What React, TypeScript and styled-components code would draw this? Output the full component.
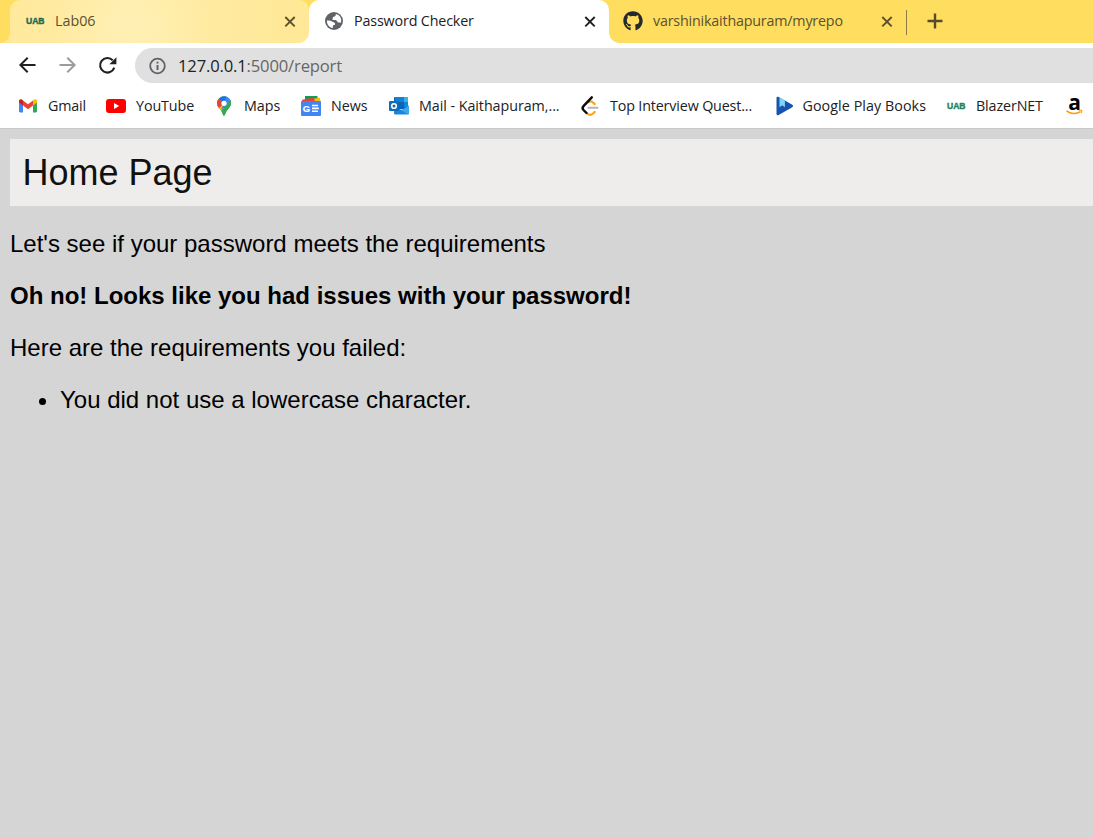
import React from 'react';
import styled, { createGlobalStyle } from 'styled-components';
import { FaGithub } from 'react-icons/fa';

const GlobalStyle = createGlobalStyle`
  * { box-sizing: border-box; }
  html, body { margin: 0; padding: 0; overflow: hidden; }
  body { background: #d5d5d5; }
`;

const Window = styled.div`
  display: flex;
  flex-direction: column;
  width: 100%;
  height: 838px;
  overflow: hidden;
  font-family: 'Open Sans', 'Noto Sans', sans-serif;
`;

const TabStrip = styled.div`
  display: flex;
  height: 43px;
  padding-left: 10px;
  background: #ffdd5e;
`;

type TabKind = 'hover' | 'active' | 'idle';

const tabBackground: Record<TabKind, string> = {
  hover: 'radial-gradient(circle 150px at 122px 26px, #fff0b5 0%, #ffeaa0 55%, #ffe999 100%)',
  active: '#ffffff',
  idle: 'transparent',
};
const flareColor: Record<TabKind, string> = {
  hover: '#ffe78f',
  active: '#ffffff',
  idle: 'transparent',
};

const Tab = styled.div<{ $kind: TabKind; $width: number }>`
  position: relative;
  display: flex;
  align-items: center;
  flex: none;
  width: ${(p) => p.$width}px;
  height: 43px;
  padding: 0 9px 2px ${(p) => (p.$kind === 'idle' ? 14 : 15)}px;
  border-radius: 10px 10px 0 0;
  background: ${(p) => tabBackground[p.$kind]};
  color: ${(p) => (p.$kind === 'active' ? '#202124' : '#5c5130')};

  &::before,
  &::after {
    content: '';
    position: absolute;
    bottom: 0;
    width: 10px;
    height: 10px;
  }
  &::before {
    left: -10px;
    background: radial-gradient(circle at 0 0, transparent 9.5px, ${(p) => flareColor[p.$kind]} 10px);
  }
  &::after {
    display: ${(p) => (p.$kind === 'active' ? 'block' : 'none')};
    right: -10px;
    background: radial-gradient(circle at 100% 0, transparent 9.5px, ${(p) => flareColor[p.$kind]} 10px);
  }
`;

const TabTitle = styled.span<{ $tracking: number }>`
  flex: 1;
  margin-left: 10px;
  font-size: 14.3px;
  line-height: 20px;
  letter-spacing: ${(p) => p.$tracking}px;
  white-space: nowrap;
`;

const StripDivider = styled.div`
  width: 1px;
  height: 25px;
  margin-top: 10px;
  background: #8b7c43;
`;

const NewTab = styled.div`
  display: flex;
  align-items: center;
  height: 43px;
  padding: 0 0 1px 20px;
  color: #574c2a;
`;

const Toolbar = styled.div`
  display: flex;
  align-items: center;
  height: 45px;
  padding: 0 0 0 17px;
  background: #ffffff;
`;

const NavButton = styled.span<{ $muted?: boolean }>`
  display: flex;
  width: 40px;
  color: ${(p) => (p.$muted ? '#9b9c9d' : '#202124')};
`;

const AddressBar = styled.div`
  display: flex;
  align-items: center;
  flex: 1;
  height: 35px;
  margin-left: -2px;
  padding-left: 13px;
  border-radius: 18px 0 0 18px;
  background: #e0e0e0;
`;

const Url = styled.span`
  margin-left: 12px;
  font-size: 16.6px;
  line-height: 24px;
  letter-spacing: -0.16px;
  color: #666666;
`;

const Host = styled.span`
  color: #202124;
`;

const BookmarkBar = styled.div`
  display: flex;
  align-items: center;
  height: 41px;
  padding: 0 0 4px 18px;
  border-bottom: 1px solid #c9c9c9;
  background: #ffffff;
`;

const Bookmark = styled.div<{ $width: number }>`
  display: flex;
  align-items: center;
  flex: none;
  width: ${(p) => p.$width}px;
`;

const BookmarkLabel = styled.span<{ $tracking: number }>`
  margin-left: 10px;
  font-size: 14.3px;
  line-height: 20px;
  letter-spacing: ${(p) => p.$tracking}px;
  color: #202124;
  white-space: nowrap;
`;

const Page = styled.main`
  flex: 1;
  padding: 10px 0 0 10px;
  background: #d5d5d5;
  color: #000;
  font-family: 'Liberation Sans', Arial, sans-serif;
  font-size: 24px;
  line-height: 28px;
`;

const PageHeader = styled.header`
  height: 67px;
  padding: 0 12.5px;
  background: #eeedeb;
  color: #111111;
  font-size: 36px;
  line-height: 67px;
`;

const Paragraph = styled.p<{ $strong?: boolean }>`
  margin: 24px 0;
  font-weight: ${(p) => (p.$strong ? 700 : 400)};
`;

const IssueList = styled.ul`
  margin: 24px 0;
  padding-left: 50px;
`;

const Icon = styled.svg`
  display: block;
  flex: none;
  overflow: visible;
`;

const CloseIcon = () => (
  <Icon width="20" height="20" viewBox="0 0 20 20" stroke="currentColor" strokeWidth="1.9">
    <path d="M5.3 6l9.400 9.400M14.700 6l-9.400 9.400" />
  </Icon>
);

const PlusIcon = () => (
  <Icon width="16" height="16" viewBox="0 0 16 16" stroke="currentColor" strokeWidth="2.4">
    <path d="M8 .5v15M.5 8h15" />
  </Icon>
);

const BackIcon = () => (
  <Icon width="20" height="20" viewBox="0 0 20 20" fill="none" stroke="currentColor" strokeWidth="2">
    <path d="M18.5 9H4M10.700 1.700L3.400 9l7.300 7.300" />
  </Icon>
);

const ForwardIcon = () => (
  <Icon width="20" height="20" viewBox="0 0 20 20" fill="none" stroke="currentColor" strokeWidth="2">
    <path d="M2.500 9H17M10.300 1.700l7.300 7.300-7.300 7.300" />
  </Icon>
);

const ReloadIcon = () => (
  <Icon width="20" height="20" viewBox="0 0 20 20" fill="none" stroke="currentColor" strokeWidth="2.1">
    <path d="M17.300 11.700A7.300 7.300 0 1 1 15.700 4.200" />
    <path d="M19.400 1.200v7h-7z" fill="currentColor" stroke="none" />
  </Icon>
);

const InfoIcon = () => (
  <Icon width="18" height="18" viewBox="0 0 18 18" fill="none" stroke="#5f6368" strokeWidth="1.8">
    <circle cx="9.500" cy="9" r="7.300" />
    <path d="M9.500 8v5M9.500 4.800v1.800" strokeWidth="2" />
  </Icon>
);

const GlobeIcon = () => (
  <Icon width="20" height="20" viewBox="0 0 20 20">
    <circle cx="10" cy="10" r="9" fill="#5f6368" />
    <path
      d="M11.800 3c.2 1.700-.7 2.500-2 2.700-1.300.2-.7 1.300-1.200 2.100-.3.600-.4 1.200.6 1.200h2.300c1.700 0 1.500 2.600 3.100 2.600.9 0 1.300.3 2.200.2C18.200 8.300 16.300 4 11.800 3z"
      fill="#ffffff"
    />
    <path
      d="M2.900 9.500c1.900-.1 3.800.1 5 .9 1.400 1 3.400 1.100 3.300 2.600-.1 1.200-1.900.7-2.300 1.700-.3.800.3 1.400-.1 2.300C5.200 16.600 2.700 13.300 2.900 9.500z"
      fill="#ffffff"
    />
  </Icon>
);

const UabIcon = ({ color = '#1e6b52' }: { color?: string }) => (
  <Icon width="20" height="20" viewBox="0 0 20 20">
    <text
      x="1"
      y="13"
      fontFamily="Liberation Sans, sans-serif"
      fontSize="8.5"
      fontWeight="700"
      fill={color}
      stroke={color}
      strokeWidth="0.4"
      textLength="18.5"
      lengthAdjust="spacingAndGlyphs"
    >
      UAB
    </text>
  </Icon>
);

const GmailIcon = () => (
  <Icon width="20" height="20" viewBox="0 0 20 20">
    <path d="M1 5.500v9.800c0 .7.500 1.200 1.200 1.200H5V8.500z" fill="#4285f4" />
    <path d="M15 8.500v8h2.800c.7 0 1.200-.5 1.200-1.200V5.500z" fill="#34a853" />
    <path d="M15 4.500v5l4-3V5c0-1.600-1.700-2.400-3-1.400z" fill="#fbbc04" />
    <path d="M5 9.500v-5L10 8.200l5-3.700v5l-5 3.800z" fill="#ea4335" />
    <path d="M1 5v1.500l4 3v-5L4 3.600C2.700 2.600 1 3.400 1 5z" fill="#c5221f" />
  </Icon>
);

const YouTubeIcon = () => (
  <Icon width="20" height="20" viewBox="0 0 20 20">
    <rect y="3" width="20" height="14" rx="3" fill="#ff0000" />
    <path d="M8 7v6l5.200-3z" fill="#ffffff" />
  </Icon>
);

const MapsIcon = () => (
  <Icon width="20" height="20" viewBox="0 0 20 20">
    <defs>
      <clipPath id="pin">
        <path d="M10 .3a7 7 0 0 0-7 7c0 3.200 2.100 4.700 4 7.200 1.600 2.100 2 5.200 3 5.200s1.400-3.100 3-5.200c1.900-2.500 4-4 4-7.200a7 7 0 0 0-7-7z" />
      </clipPath>
    </defs>
    <g clipPath="url(#pin)">
      <path d="M0 0h20v20H0z" fill="#34a853" />
      <path d="M10 7.200L3.600 14 0 9l5-6z" fill="#fbbc04" />
      <path d="M2 14l4-4 4-2.800 1.500 3.500-5.500 6z" fill="#fbbc04" />
      <path d="M10 7.200L3.500 13.400 0 8 4.700 2.800z" fill="#ea4335" />
      <path d="M10 7.200L4.600 2.700 8 0h5z" fill="#1a73e8" />
      <path d="M10 7.200L12.400 0 20 4 7 14z" fill="#4285f4" />
      <path d="M16 4.500l4-1V20H5l1-3.500z" fill="#34a853" />
    </g>
    <circle cx="10" cy="7.300" r="2.600" fill="#ffffff" />
  </Icon>
);

const NewsIcon = () => (
  <Icon width="20" height="20" viewBox="0 0 20 20">
    <path d="M4 0h12.500v6H4z" fill="#0c9d58" />
    <path d="M9 3.500L18.600 1.500 20 7H9z" fill="#fbbc04" />
    <path d="M1 3.700L13 1.400 14.500 8H1.500z" fill="#ea4335" />
    <rect y="5" width="20" height="15" rx="1" fill="#4285f4" />
    <text
      x="1.800"
      y="15.700"
      fontFamily="Liberation Sans, sans-serif"
      fontSize="9.500"
      fontWeight="700"
      fill="#ffffff"
      stroke="#ffffff"
      strokeWidth="0.2"
    >
      G
    </text>
    <path d="M11 9.500h6M11 12.400h6.800M11 15.300h6" stroke="#ffffff" strokeWidth="1.600" />
  </Icon>
);

const OutlookIcon = () => (
  <Icon width="20" height="20" viewBox="0 0 20 20">
    <rect x="5" y="1" width="14" height="12" rx="1" fill="#0a5fb4" />
    <path d="M6 1h9v5H6z" fill="#1081d6" />
    <path d="M15 1h4v5h-4z" fill="#35b4ee" />
    <path d="M10 6h5v5h-5z" fill="#0a66b8" />
    <path d="M15 6h4v5h-4z" fill="#1485d8" />
    <path d="M5 10l7.500 4L20 9.500V17c0 .8-.4 1.500-1.200 1.500H6.200c-.7 0-1.200-.6-1.200-1.200z" fill="#1a86d9" />
    <path d="M20 9.500V17c0 .8-.4 1.300-1 1.500L10.500 13l2 1z" fill="#38a9ea" />
    <rect y="5" width="10" height="10" rx="1" fill="#0f6cbd" />
    <circle cx="5" cy="10" r="2.300" fill="none" stroke="#ffffff" strokeWidth="1.600" />
  </Icon>
);

const LeetCodeIcon = () => (
  <Icon width="20" height="20" viewBox="0 0 20 20" fill="none" strokeLinecap="round">
    <path d="M8.500 6.200c1.500-1.200 3.200-1 4.500.3l1.700 1.600M6.900 17.200c2 2 4.400 2 6.200.3l1.600-1.500" stroke="#ffa116" strokeWidth="2.200" />
    <path d="M11.800 1.300L3.700 9.800c-1.500 1.500-1.500 2.800-.2 4.200l3 3" stroke="#0b0b0b" strokeWidth="2.400" />
    <path d="M8.500 11.700h9" stroke="#b3b3b3" strokeWidth="2" />
  </Icon>
);

const PlayBooksIcon = () => (
  <Icon width="20" height="20" viewBox="0 0 20 20">
    <path d="M3.500 2.200c0-1.400 1-1.800 2.200-1.200L19.300 8.800c1 .6 1 1.800 0 2.400L5.700 19c-1.200.6-2.200.2-2.200-1.200z" fill="#1a53ad" />
    <path d="M6.500 1.500v9.800l2.700-2.100 2.700 2.100V4.600z" fill="#7fd5fb" />
  </Icon>
);

const AmazonIcon = () => (
  <Icon width="20" height="20" viewBox="0 0 20 20">
    <text x="4.300" y="13.700" fontFamily="Open Sans, sans-serif" fontSize="21" fontWeight="700" fill="#000000">
      a
    </text>
    <path d="M2.500 14.800c4 3.300 10 3.400 14 .9" fill="none" stroke="#ff9900" strokeWidth="1.500" />
    <path d="M14.800 14.300l3.200-.1-.8 3" fill="none" stroke="#ff9900" strokeWidth="1" />
  </Icon>
);

const bookmarks = [
  { label: 'Gmail', width: 88, tracking: -0.2, icon: <GmailIcon /> },
  { label: 'YouTube', width: 108, tracking: -0.1, icon: <YouTubeIcon /> },
  { label: 'Maps', width: 87, tracking: 0, icon: <MapsIcon /> },
  { label: 'News', width: 88, tracking: 0, icon: <NewsIcon /> },
  { label: 'Mail - Kaithapuram,...', width: 191, tracking: -0.05, icon: <OutlookIcon /> },
  { label: 'Top Interview Quest...', width: 192.500, tracking: -0.15, icon: <LeetCodeIcon /> },
  { label: 'Google Play Books', width: 173.500, tracking: 0.06, icon: <PlayBooksIcon /> },
  { label: 'BlazerNET', width: 117.500, tracking: -0.12, icon: <UabIcon color="#26835f" /> },
];

export default function App() {
  return (
    <Window>
      <GlobalStyle />
      <TabStrip>
        <Tab $kind="hover" $width={299}>
          <UabIcon />
          <TabTitle $tracking={0}>Lab06</TabTitle>
          <CloseIcon />
        </Tab>
        <Tab $kind="active" $width={300}>
          <GlobeIcon />
          <TabTitle $tracking={-0.15}>Password Checker</TabTitle>
          <CloseIcon />
        </Tab>
        <Tab $kind="idle" $width={297}>
          <FaGithub size={20} color="#24292f" />
          <TabTitle $tracking={-0.19}>varshinikaithapuram/myrepo</TabTitle>
          <CloseIcon />
        </Tab>
        <StripDivider />
        <NewTab>
          <PlusIcon />
        </NewTab>
      </TabStrip>
      <Toolbar>
        <NavButton><BackIcon /></NavButton>
        <NavButton $muted><ForwardIcon /></NavButton>
        <NavButton><ReloadIcon /></NavButton>
        <AddressBar>
          <InfoIcon />
          <Url><Host>127.0.0.1</Host>:5000/report</Url>
        </AddressBar>
      </Toolbar>
      <BookmarkBar>
        {bookmarks.map((b) => (
          <Bookmark key={b.label} $width={b.width}>
            {b.icon}
            <BookmarkLabel $tracking={b.tracking}>{b.label}</BookmarkLabel>
          </Bookmark>
        ))}
        <Bookmark $width={30}>
          <AmazonIcon />
        </Bookmark>
      </BookmarkBar>
      <Page>
        <PageHeader>Home Page</PageHeader>
        <Paragraph>Let's see if your password meets the requirements</Paragraph>
        <Paragraph $strong>Oh no! Looks like you had issues with your password!</Paragraph>
        <Paragraph>Here are the requirements you failed:</Paragraph>
        <IssueList>
          <li>You did not use a lowercase character.</li>
        </IssueList>
      </Page>
    </Window>
  );
}
